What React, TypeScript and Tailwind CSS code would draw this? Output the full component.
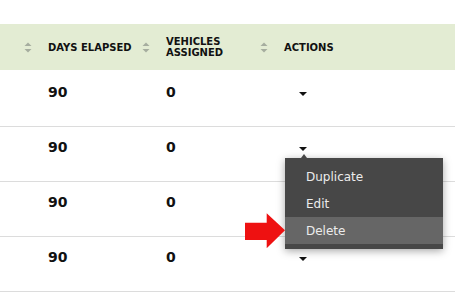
import React from "react";

const rows = [1, 2, 3, 4];

function SortIcon() {
  return (
    <svg width="8" height="11" viewBox="0 0 8 11" className="shrink-0">
      <polygon points="0.5,4 4,0.5 7.5,4" fill="#a6ad9f" />
      <polygon points="0.5,7 4,10.5 7.5,7" fill="#a6ad9f" />
    </svg>
  );
}

function Caret() {
  return (
    <svg width="8" height="4" viewBox="0 0 8 4">
      <polygon points="0,0 8,0 4,4" fill="#111" />
    </svg>
  );
}

export default function App() {
  return (
    <div
      className="relative w-[460px] h-[296px] overflow-hidden bg-white text-[#111]"
      style={{ fontFamily: '"DejaVu Sans", sans-serif' }}
    >
      <div className="pt-[24px] w-[455px]">
        {/* header */}
        <div className="grid grid-cols-[118px_118px_1fr] h-[46px] bg-[#e3ecd3] pl-[24px] items-center text-[10px] font-bold leading-[11px]">
          <div className="flex items-center gap-[16px]">
            <SortIcon />
            <span>DAYS ELAPSED</span>
          </div>
          <div className="flex items-center gap-[16px]">
            <SortIcon />
            <span>
              VEHICLES
              <br />
              ASSIGNED
            </span>
          </div>
          <div className="flex items-center gap-[16px]">
            <SortIcon />
            <span>ACTIONS</span>
          </div>
        </div>

        {/* body */}
        <div className="pt-[2px]">
          {rows.map((r) => (
            <div
              key={r}
              className="grid grid-cols-[118px_118px_1fr] h-[55px] border-b border-[#dcdcdc] pl-[24px] text-[14px] font-bold leading-4"
            >
              <div className="pl-[24px] pt-[12px]">90</div>
              <div className="pl-[24px] pt-[12px]">0</div>
              <div className="pl-[39px] pt-[20px]">
                <div className="leading-none flex">
                  <Caret />
                </div>
              </div>
            </div>
          ))}
        </div>
      </div>

      {/* dropdown menu */}
      <div className="absolute left-[285px] top-[158px] w-[158px] bg-[#474747] pt-[5px] pb-[5px] shadow-[0_2px_8px_rgba(0,0,0,0.35)] text-[12px] text-[#ececec]">
        <svg
          width="6"
          height="4"
          viewBox="0 0 6 4"
          className="absolute left-[16px] -top-[4px]"
        >
          <polygon points="0,4 3,0 6,4" fill="#474747" />
        </svg>
        <div className="h-[27px] flex items-center pl-[21px]">Duplicate</div>
        <div className="h-[27px] flex items-center pl-[21px]">Edit</div>
        <div className="h-[27px] flex items-center pl-[21px] bg-[#666666]">Delete</div>
      </div>

      {/* red pointer arrow */}
      <svg
        width="41"
        height="36"
        viewBox="0 0 41 36"
        className="absolute left-[245px] top-[213px]"
      >
        <polygon
          points="0,9.7 21.7,9.7 21.7,0.3 40,17.3 21.7,35.3 21.7,27 0,27"
          fill="#ee1111"
        />
      </svg>
    </div>
  );
}
